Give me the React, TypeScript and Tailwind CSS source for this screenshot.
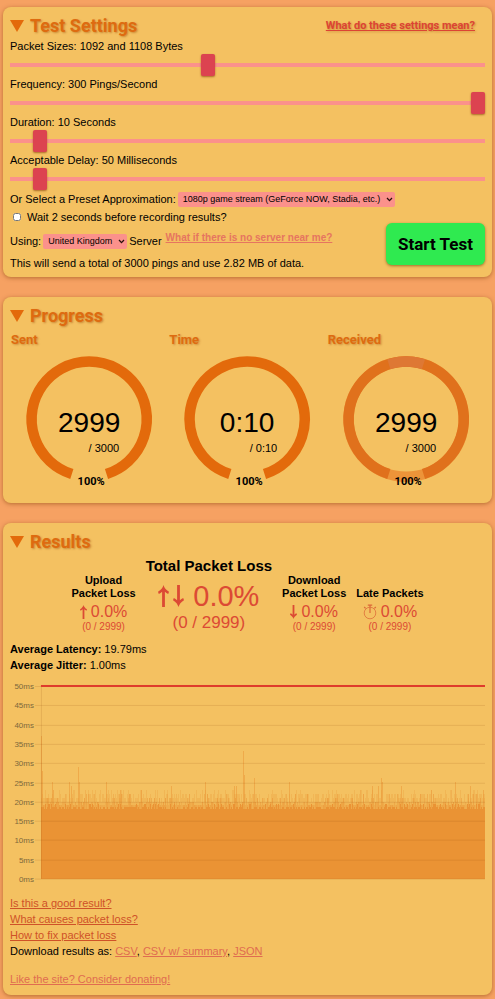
import { useState, type ReactNode } from 'react';

// ========================================
// Types and data
// ========================================
interface SliderProps {
  id: string;
  label: string;
  min: number;
  max: number;
  initial: number;
}

interface DropdownProps {
  id: string;
  options: string[];
}

interface GaugeProps {
  title: string;
  value: string;
  total: string;
  full?: boolean;
}

interface LossProps {
  title: ReactNode;
  icon: ReactNode;
  large?: boolean;
}

const SLIDERS: SliderProps[] = [
  { id: 'size', label: 'Packet Sizes: 1092 and 1108 Bytes', min: 0, max: 1000, initial: 414 },
  { id: 'frequency', label: 'Frequency: 300 Pings/Second', min: 1, max: 300, initial: 300 },
  { id: 'duration', label: 'Duration: 10 Seconds', min: 0, max: 200, initial: 10 },
  { id: 'delay', label: 'Acceptable Delay: 50 Milliseconds', min: 0, max: 1000, initial: 49 },
];

// latency spikes in ms, keyed by column of the chart
const SPIKES: Record<number, number> = {
  0: 37, 1: 28, 11: 25, 28: 25, 30: 24, 37: 29, 38: 25, 65: 25, 79: 23, 130: 24,
  164: 25, 193: 24, 195: 24, 202: 33, 203: 27, 214: 26, 249: 25, 332: 24,
  338: 24, 341: 26, 342: 25, 361: 24, 415: 25, 430: 24,
};

const TICKS = [50, 45, 40, 35, 30, 25, 20, 15, 10, 5, 0];

const yOf = (ms: number) => 199 - ms * 3.86;

function noise(n: number) {
  const v = Math.sin(n * 127.1 + 11.7) * 43758.5453;
  return v - Math.floor(v);
}

// ========================================
// Building blocks
// ========================================
function Panel({ title, extra, children }: { title: string; extra?: ReactNode; children: ReactNode }) {
  return (
    <section className="rounded-lg bg-[#f4c161] px-[7px] pt-[7px] pb-[6px] shadow-[0_1px_4px_rgba(120,60,0,0.5)]">
      <div className="flex h-6 items-center justify-between">
        <h2 className="flex items-center gap-[6px] font-[Roboto,'Liberation_Sans',sans-serif] text-[18px] leading-[22px] font-bold text-[#de6b10] [text-shadow:1px_1px_2px_rgba(150,70,0,0.45)]">
          <svg width="14" height="12" viewBox="0 0 14 12" aria-hidden="true">
            <path d="M0 0h14L7 12z" fill="#e36a0b" />
          </svg>
          {title}
        </h2>
        {extra}
      </div>
      {children}
    </section>
  );
}

function Slider({ id, label, min, max, initial }: SliderProps) {
  const [value, setValue] = useState(initial);

  return (
    <div>
      <label htmlFor={id} className="block leading-4">{label}</label>
      <input
        id={id}
        type="range"
        min={min}
        max={max}
        value={value}
        onChange={(e) => setValue(Number(e.target.value))}
        className="block h-[22px] w-full appearance-none bg-transparent [&::-webkit-slider-runnable-track]:h-1 [&::-webkit-slider-runnable-track]:bg-[#fb918b] [&::-webkit-slider-thumb]:-mt-[9px] [&::-webkit-slider-thumb]:h-[22px] [&::-webkit-slider-thumb]:w-[14px] [&::-webkit-slider-thumb]:appearance-none [&::-webkit-slider-thumb]:rounded-[2px] [&::-webkit-slider-thumb]:bg-[#dc4350] [&::-webkit-slider-thumb]:shadow-[0_1px_2px_rgba(120,50,0,0.6)]"
      />
    </div>
  );
}

function Dropdown({ id, options }: DropdownProps) {
  return (
    <span className="relative flex">
      <select id={id} className="h-[15px] appearance-none rounded-[2px] bg-[#fb918b] pr-[14px] pl-[5px] text-[9px] leading-[15px]">
        {options.map((option) => (
          <option key={option}>{option}</option>
        ))}
      </select>
      <svg className="pointer-events-none absolute top-[5px] right-[2px]" width="7" height="5" viewBox="0 0 7 5" aria-hidden="true">
        <path d="M1 1l2.5 2.6L6 1" fill="none" stroke="#2a0f0a" strokeWidth="1.3" />
      </svg>
    </span>
  );
}

function Gauge({ title, value, total, full }: GaugeProps) {
  return (
    <div className="min-w-0 flex-1">
      <h3 className="pl-px font-[Roboto,'Liberation_Sans',sans-serif] text-[13px] leading-5 font-bold text-[#de6b10] [text-shadow:1px_1px_2px_rgba(150,70,0,0.4)]">
        {title}
      </h3>
      <svg viewBox="0 0 158 147" className="block w-full" role="img" aria-label={`${title} ${value} / ${total}`}>
        {full && <circle cx="79" cy="69" r="57.5" fill="none" stroke="#ed9439" strokeWidth="10.5" />}
        <path
          d="M61.7 123.8A57.5 57.5 0 1 1 96.3 123.8"
          fill="none"
          stroke={full ? '#e0711c' : '#e36a0b'}
          strokeWidth="10.5"
        />
        {full && <path d="M61.7 14.2A57.5 57.5 0 0 1 96.3 14.2" fill="none" stroke="#de7834" strokeWidth="10.5" />}
        <text x="79" y="82" textAnchor="middle" fontSize="28">{value}</text>
        <text x="109" y="102" textAnchor="end" fontSize="11">{`/ ${total}`}</text>
        <text
          x="81"
          y="135"
          textAnchor="middle"
          fontSize="11"
          fontWeight="bold"
          className="font-[Roboto,'Liberation_Sans',sans-serif]"
        >
          100%
        </text>
      </svg>
    </div>
  );
}

const ARROW = 'M5.5 0C6.2 2.6 8 5 11 6.8L10.2 9C8.9 8.5 7.8 7.7 6.9 6.8V22H4.1V6.8C3.2 7.7 2.1 8.5.8 9L0 6.8C3 5 4.8 2.6 5.5 0z';

function UpArrow({ large }: { large?: boolean }) {
  return (
    <svg className={large ? 'h-[22px] w-[11px]' : 'h-[14px] w-[7px]'} viewBox="0 0 11 22" aria-hidden="true">
      <path d={ARROW} fill="currentColor" />
    </svg>
  );
}

function DownArrow({ large }: { large?: boolean }) {
  return (
    <svg className={large ? 'h-[22px] w-[11px]' : 'h-[14px] w-[7px]'} viewBox="0 0 11 22" aria-hidden="true">
      <path d={ARROW} fill="currentColor" transform="rotate(180 5.5 11)" />
    </svg>
  );
}

function Stopwatch() {
  return (
    <svg width="14" height="16" viewBox="0 0 14 16" fill="none" stroke="#dc6938" aria-hidden="true">
      <circle cx="7" cy="9" r="5.8" strokeWidth="1" opacity=".75" />
      <path d="M7 9V1M4.8 1.2H9.2M11.4 4.4L12.8 3M2.6 4.4L1.2 3" strokeWidth="1.2" />
    </svg>
  );
}

function Loss({ title, icon, large }: LossProps) {
  return (
    <div className="text-center text-[#dc4a34]">
      <h3 className={large ? 'mb-1 text-[15px] leading-[18px] font-bold text-black' : 'mb-[3px] leading-[13px] font-bold text-black'}>
        {title}
      </h3>
      <div className={large ? 'flex items-center justify-center gap-[9px] text-[29px] leading-[34px]' : 'flex items-center justify-center gap-1 text-base leading-[18px]'}>
        {icon}
        <span>0.0%</span>
      </div>
      <p className={large ? 'text-[17px] leading-5' : 'text-[10px] leading-3'}>(0 / 2999)</p>
    </div>
  );
}

function LatencyChart() {
  const columns = Array.from({ length: 445 }, (_, i) => {
    const base = 18 + Math.floor(noise(i) * 2.4) * 0.7;
    const haze = 20 + Math.floor(noise(i + 313) * 3.4);
    const peak = SPIKES[i] ?? 19 + Math.floor(noise(i + 900) * noise(i + 501) * 5);
    return { i, base, haze, peak, alpha: SPIKES[i] ? 0.5 : 0.2 + noise(i + 77) * 0.4 };
  });

  return (
    <svg viewBox="0 0 476 206" className="block w-full" role="img" aria-label="Latency over time">
      <g fill="#ea9334" shapeRendering="crispEdges">
        {columns.map(({ i, base, haze, peak, alpha }) => (
          <g key={i}>
            <rect x={31 + i} y={yOf(base)} width="1" height={199 - yOf(base)} />
            <rect x={31 + i} y={yOf(haze)} width="1" height={yOf(base) - yOf(haze)} opacity=".24" />
            {peak > base && (
              <rect x={31 + i} y={yOf(peak)} width="1" height={yOf(base) - yOf(peak)} opacity={alpha} />
            )}
          </g>
        ))}
      </g>
      {/* grid lines and axis labels */}
      {TICKS.map((ms) => (
        <g key={ms}>
          <rect x="25" y={Math.round(yOf(ms))} width="451" height="1" fill="#804000" opacity=".13" />
          <text x="24" y={Math.round(yOf(ms)) + 3} textAnchor="end" fontSize="8" fill="#7d683c">{`${ms}ms`}</text>
        </g>
      ))}
      <rect x="31" y="6" width="1" height="193" fill="#804000" opacity=".13" />
      <rect x="31" y="5" width="445" height="2" fill="#df3b2c" />
    </svg>
  );
}

// ========================================
// Page
// ========================================
export default function App() {
  const [wait, setWait] = useState(false);

  return (
    <main className="flex min-h-screen flex-col gap-5 bg-[#f6a162] px-[3px] pt-[7px] pb-1 font-['Liberation_Sans',sans-serif] text-[11px] leading-4 text-black">
      <Panel
        title="Test Settings"
        extra={
          <a
            href="#settings"
            className="mr-[10px] font-[Roboto,'Liberation_Sans',sans-serif] text-[11px] leading-4 font-bold text-[#dc4434] underline [text-shadow:1px_1px_2px_rgba(150,70,0,0.4)]"
          >
            What do these settings mean?
          </a>
        }
      >
        {SLIDERS.map((s) => (
          <Slider key={s.id} {...s} />
        ))}
        <div className="flex h-[18px] items-center gap-[2px]">
          <label htmlFor="preset">Or Select a Preset Approximation:</label>
          <Dropdown id="preset" options={['1080p game stream (GeForce NOW, Stadia, etc.)', 'Voice call']} />
        </div>
        <div className="flex items-end justify-between">
          <div>
            <div className="flex h-[18px] items-center gap-[6px] pl-[3px]">
              <input
                id="wait"
                type="checkbox"
                checked={wait}
                onChange={(e) => setWait(e.target.checked)}
                className="size-2"
              />
              <label htmlFor="wait">Wait 2 seconds before recording results?</label>
            </div>
            <div className="mt-[7px] flex h-4 items-center gap-[2px]">
              <label htmlFor="server">Using:</label>
              <Dropdown id="server" options={['United Kingdom', 'Germany']} />
              <span>Server</span>
              <a href="#servers" className="ml-[2px] self-start text-[10px] leading-[10px] font-bold text-[#e67560] underline">
                What if there is no server near me?
              </a>
            </div>
            <p className="mt-[6px]">This will send a total of 3000 pings and use 2.82 MB of data.</p>
          </div>
          <button
            type="button"
            className="mb-[6px] h-[42px] w-[99px] rounded-md bg-[#2fea50] font-[Roboto,'Liberation_Sans',sans-serif] text-[17px] font-bold whitespace-nowrap shadow-[0_1px_3px_rgba(100,60,0,0.6)]"
          >
            Start Test
          </button>
        </div>
      </Panel>

      <Panel title="Progress">
        <div className="mt-[2px] flex">
          <Gauge title="Sent" value="2999" total="3000" />
          <Gauge title="Time" value="0:10" total="0:10" />
          <Gauge title="Received" value="2999" total="3000" full />
        </div>
      </Panel>

      <Panel title="Results">
        <div className="mt-[3px] flex items-end justify-center gap-[10px]">
          <Loss title={<>Upload<br />Packet Loss</>} icon={<UpArrow />} />
          <Loss title="Total Packet Loss" icon={<span className="flex gap-1"><UpArrow large /><DownArrow large /></span>} large />
          <Loss title={<>Download<br />Packet Loss</>} icon={<DownArrow />} />
          <Loss title="Late Packets" icon={<Stopwatch />} />
        </div>
        <div className="mt-2 mb-[7px]">
          <p><b>Average Latency:</b> 19.79ms</p>
          <p><b>Average Jitter:</b> 1.00ms</p>
        </div>
        <LatencyChart />
        <div className="mt-[9px] flex flex-col items-start text-[#cf5228]">
          <a href="#good" className="underline">Is this a good result?</a>
          <a href="#causes" className="underline">What causes packet loss?</a>
          <a href="#fix" className="underline">How to fix packet loss</a>
          <p className="text-black">
            Download results as: <a href="#csv" className="text-[#e06c50] underline">CSV</a>,{' '}
            <a href="#summary" className="text-[#e06c50] underline">CSV w/ summary</a>,{' '}
            <a href="#json" className="text-[#e06c50] underline">JSON</a>
          </p>
          <a href="#donate" className="mt-3 mb-[2px] text-[#e06c50] underline">Like the site? Consider donating!</a>
        </div>
      </Panel>
    </main>
  );
}
